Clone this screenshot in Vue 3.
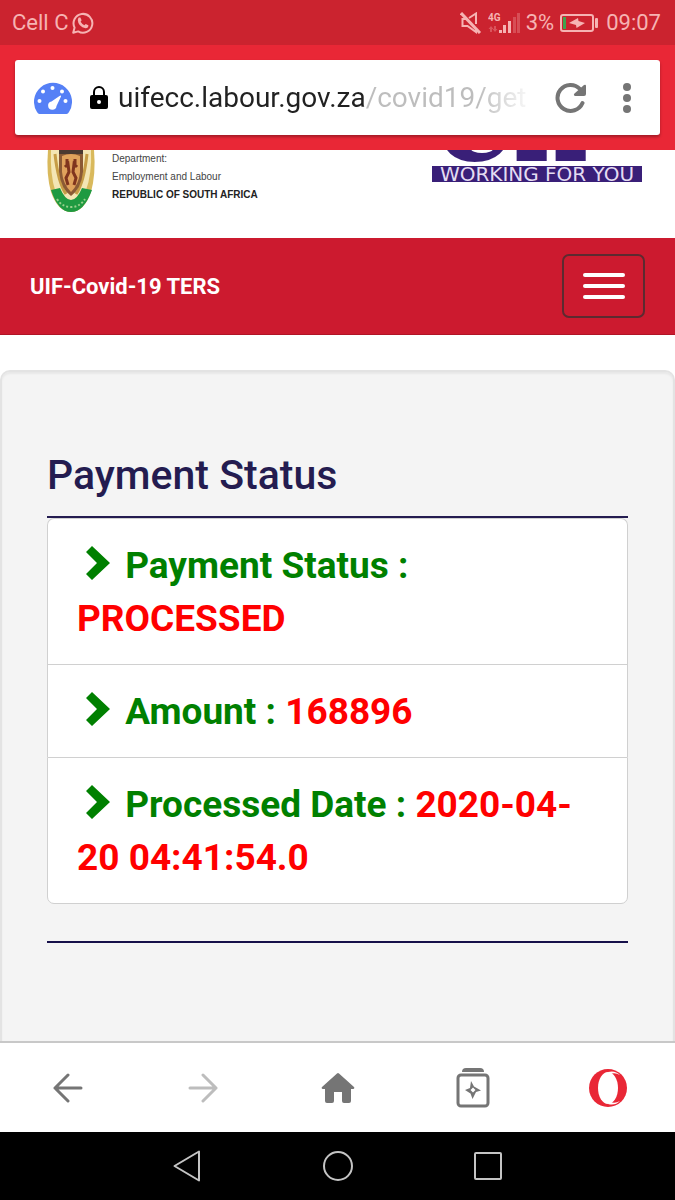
<script setup>
import { ref } from 'vue';

const url = ref('uifecc.labour.gov.za/covid19/get');

const items = ref([
    { label: 'Payment Status :', value: 'PROCESSED' },
    { label: 'Amount :', value: '168896' },
    { label: 'Processed Date :', value: '2020-04-20 04:41:54.0' },
]);
</script>

<template>
    <div class="phone">
        <div class="status-bar">
            <div class="carrier">
                <span>Cell C</span>
                <svg width="22" height="22" viewBox="0 0 22 22" fill="none" stroke="currentColor" stroke-width="2">
                    <path d="M1.2 20.8 L2.6 15.6 A9.4 9.4 0 1 1 6.2 19.4 Z" stroke-linejoin="round" />
                    <path d="M6.8 5.6 L8.4 5.4 L9.6 8.3 L8.6 9.8 Q10 12.2 12.4 13.2 L13.7 12 L16.4 13.3 Q16.5 16.2 13.6 16.2 Q6.2 14.6 5.8 8.2 Q5.8 6.6 6.8 5.6 Z" fill="currentColor" stroke="none" />
                </svg>
            </div>
            <div class="indicators">
                <svg width="22" height="22" viewBox="0 0 22 22" fill="none" stroke="currentColor" stroke-width="2">
                    <path d="M1 1 L20 21" stroke-width="3" />
                    <path d="M6 7 H2.5 V14 H7.5 L16 20 V16 M9 6 L16 1.5 V12" />
                </svg>
                <svg class="signal" width="34" height="22" viewBox="0 0 34 22" fill="currentColor">
                    <text x="0" y="9" font-size="10" font-weight="700">4G</text>
                    <path d="M3 14 L5.5 17 H4 V20 H2 V17 H0.5 Z M7 20 L4.5 17 H6 V14 H8 V17 H9.5 Z" opacity="0.35" />
                    <rect x="11" y="18" width="3" height="3" />
                    <rect x="15" y="13" width="3" height="8" />
                    <rect x="20" y="9" width="3" height="12" />
                    <rect x="25" y="5" width="3" height="16" opacity="0.3" />
                    <rect x="29" y="1" width="3" height="20" opacity="0.3" />
                </svg>
                <span>3%</span>
                <svg class="battery" width="38" height="18" viewBox="0 0 38 18" fill="none">
                    <rect x="1" y="1" width="32" height="16" rx="2" stroke="currentColor" stroke-width="2" />
                    <rect x="3" y="3" width="3" height="12" fill="#3fa34d" />
                    <path d="M9 9 L18 4 L18.5 7 L25 9 L16.5 14 L16 11 Z" fill="currentColor" />
                    <rect x="35" y="4" width="3" height="10" rx="1" fill="currentColor" />
                </svg>
                <span>09:07</span>
            </div>
        </div>

        <header class="address-area">
            <form class="address-bar" @submit.prevent>
                <svg width="38" height="32" viewBox="0 0 38 32">
                    <path d="M5.5 32 Q4 32 3 30 A19 19 0 1 1 35 30 Q34 32 32.5 32 Z" fill="#5580f6" />
                    <g fill="#fff">
                        <circle cx="5.5" cy="19" r="2" />
                        <circle cx="9" cy="9.5" r="2" />
                        <circle cx="18.5" cy="6" r="2" />
                        <circle cx="28" cy="9.5" r="2" />
                        <circle cx="31.5" cy="19" r="2" />
                        <path d="M27 14.5 L22.5 24 A4.2 4.2 0 1 1 17.5 19.5 L25.5 14 Q27.5 13 27 14.5 Z" />
                    </g>
                </svg>
                <svg width="18" height="24" viewBox="0 0 18 24">
                    <path d="M4 11 V6 A5 5 0 0 1 14 6 V11" fill="none" stroke="#000" stroke-width="2" />
                    <rect x="0" y="9" width="18" height="14" rx="2" fill="#000" />
                    <circle cx="9" cy="16" r="2" fill="#fff" />
                </svg>
                <input v-model="url" class="url" type="text" aria-label="Address" spellcheck="false">
                <button type="button" class="icon-button" aria-label="Reload">
                    <svg width="32" height="32" viewBox="0 0 32 32">
                        <path d="M27.5 21 A13 13 0 1 1 25 7" fill="none" stroke="#757575" stroke-width="4" stroke-linecap="round" />
                        <path d="M31 4 V12 Q31 14 29 14 H20 Q18 13 19.5 11.5 L29 3 Q31 2 31 4 Z" fill="#757575" />
                    </svg>
                </button>
                <button type="button" class="icon-button" aria-label="Menu">
                    <svg width="10" height="32" viewBox="0 0 10 32" fill="#757575">
                        <circle cx="5" cy="5" r="4" />
                        <circle cx="5" cy="16" r="4" />
                        <circle cx="5" cy="27" r="4" />
                    </svg>
                </button>
            </form>
        </header>

        <main class="page">
            <div class="logos">
                <div class="department">
                    <svg width="50" height="64" viewBox="0 0 50 64">
                        <path d="M2 0 H48 Q50 24 45 42 Q38 62 25 62 Q12 62 5 42 Q0 24 2 0 Z" fill="#d9b95c" />
                        <path d="M5 0 H45 Q46 24 40 40 Q34 54 25 56 Q15 54 9 40 Q4 24 5 0 Z" fill="#f4e6b4" />
                        <path d="M5 40 L14 38 Q19 50 25 50 Q31 50 36 38 L46 40 Q38 62 25 62 Q12 62 5 40 Z" fill="#1f9a41" />
                        <path d="M11 49 Q16 57 25 57 Q34 57 39 49" fill="none" stroke="#9bd08c" stroke-width="2" stroke-dasharray="2 2" />
                        <path d="M9 4 Q12 32 20 44 M41 4 Q38 32 30 44" fill="none" stroke="#c69c45" stroke-width="3" />
                        <path d="M13 3 H37 V22 Q35 39 25 46 Q15 39 13 22 Z" fill="#8b5a35" />
                        <path d="M16 6 Q25 2 34 6 V22 Q33 34 25 42 Q17 34 16 22 Z" fill="#e0a25c" />
                        <path d="M21 9 V14 M29 9 V14 M19 17 L22 14 L23 22 L20 28 L22 35 M31 17 L28 14 L27 22 L30 28 L28 35" fill="none" stroke="#80351e" stroke-width="3" />
                        <rect x="13" y="0" width="24" height="4" fill="#4b3a31" />
                    </svg>
                    <div class="department-text">
                        <span>Department:</span>
                        <span>Employment and Labour</span>
                        <strong>REPUBLIC OF SOUTH AFRICA</strong>
                    </div>
                </div>
                <div class="uif">
                    <svg width="210" height="12" viewBox="0 0 210 12">
                        <text class="uif-letters" x="13 88 127" y="2">UIF</text>
                        <ellipse cx="50" cy="-1" rx="11" ry="4" fill="#fff" />
                    </svg>
                    <span class="slogan">WORKING FOR YOU</span>
                </div>
            </div>

            <nav class="navbar">
                <a class="brand" href="#">UIF-Covid-19 TERS</a>
                <button type="button" class="toggler" aria-label="Toggle navigation">
                    <span></span>
                    <span></span>
                    <span></span>
                </button>
            </nav>

            <section class="well">
                <h1>Payment Status</h1>
                <ul class="list-group">
                    <li v-for="item in items" :key="item.label">
                        <svg class="chevron" width="24" height="34" viewBox="0 0 24 34">
                            <path d="M6 0 L24 17 L6 34 L0 28 L11 17 L0 6 Z" fill="#008000" />
                        </svg>
                        {{ item.label }} <span class="value">{{ item.value }}</span>
                    </li>
                </ul>
            </section>
        </main>

        <nav class="browser-nav">
            <button type="button" aria-label="Back">
                <svg width="30" height="30" viewBox="0 0 30 30" fill="none" stroke="#757575" stroke-width="3" stroke-linecap="round" stroke-linejoin="round">
                    <path d="M28 15 H2 M15 2 L2 15 L15 28" />
                </svg>
            </button>
            <button type="button" aria-label="Forward">
                <svg width="30" height="30" viewBox="0 0 30 30" fill="none" stroke="#bdbdbd" stroke-width="3" stroke-linecap="round" stroke-linejoin="round">
                    <path d="M2 15 H28 M15 2 L28 15 L15 28" />
                </svg>
            </button>
            <button type="button" aria-label="Home">
                <svg width="34" height="30" viewBox="0 0 34 30">
                    <path d="M16 0.5 Q17 -0.5 18 0.5 L33 14 Q34 16 32 16 H30 V28 Q30 30 28 30 H23 Q21 30 21 28 V19 H13 V28 Q13 30 11 30 H6 Q4 30 4 28 V16 H2 Q0 16 1 14 Z" fill="#757575" />
                </svg>
            </button>
            <button type="button" aria-label="Tabs">
                <svg width="34" height="40" viewBox="0 0 34 40" fill="#757575">
                    <path d="M6 4 Q6 0 10 0 H24 Q28 0 28 4 Z" />
                    <rect x="2" y="7" width="30" height="31" rx="3" fill="none" stroke="#757575" stroke-width="3" />
                    <path fill-rule="evenodd" d="M15 13 L18 18.5 L25 22.5 L20 24 L16.5 31 L14.5 25.5 L9 22 L14 20 Z M17 19.5 L14.5 22 L17 24.5 L19.5 22 Z" />
                </svg>
            </button>
            <button type="button" aria-label="Opera menu">
                <svg width="38" height="38" viewBox="0 0 38 38">
                    <circle cx="19" cy="19" r="19" fill="#e92736" />
                    <ellipse cx="19" cy="19" rx="10" ry="16" fill="#fff" />
                    <path d="M19 3 Q26 1 31 6 Q26 3 21 5 Z M19 35 Q26 37 31 32 Q26 35 21 33 Z" fill="#fff" />
                </svg>
            </button>
        </nav>

        <footer class="system-nav">
            <button type="button" aria-label="System back">
                <svg width="30" height="34" viewBox="0 0 30 34">
                    <path d="M26 2.5 V31.5 L1.5 17 Z" fill="none" stroke="#c4c4c4" stroke-width="2" stroke-linejoin="round" />
                </svg>
            </button>
            <button type="button" aria-label="System home">
                <svg width="32" height="34" viewBox="0 0 32 34">
                    <circle cx="16" cy="17" r="14" fill="none" stroke="#c4c4c4" stroke-width="2" />
                </svg>
            </button>
            <button type="button" aria-label="Recent apps">
                <svg width="30" height="34" viewBox="0 0 30 34">
                    <rect x="2" y="4" width="26" height="26" rx="1" fill="none" stroke="#c4c4c4" stroke-width="2" />
                </svg>
            </button>
        </footer>
    </div>
</template>

<style>
body {
    margin: 0;
}
</style>

<style scoped>
.phone {
    min-height: 100vh;
    display: flex;
    flex-direction: column;
    background: #fff;
    font-family: Roboto, "Liberation Sans", sans-serif;
}

.phone * {
    box-sizing: border-box;
}

svg {
    display: block;
    flex: none;
}

button {
    display: flex;
    align-items: center;
    justify-content: center;
    padding: 0;
    border: 0;
    background: none;
}

/* --- Status bar --- */
.status-bar {
    display: flex;
    align-items: center;
    justify-content: space-between;
    height: 45px;
    padding: 0 14px 0 12px;
    background: #cb232f;
    color: #f6b3b3;
    font-size: 22px;
}

.carrier,
.indicators {
    display: flex;
    align-items: center;
    gap: 4px;
}

.signal {
    margin-left: 2px;
}

.battery {
    margin: 0 4px 0 2px;
}

/* --- Address bar --- */
.address-area {
    padding: 15px;
    background: #e92736;
}

.address-bar {
    display: flex;
    align-items: center;
    height: 75px;
    padding: 0 28px 0 19px;
    gap: 18px;
    background: #fff;
    border-radius: 3px;
    box-shadow: 0 2px 3px rgba(0, 0, 0, 0.3);
}

.url {
    flex: 1;
    min-width: 0;
    margin-left: -8px;
    padding: 0;
    border: 0;
    outline: 0;
    font-family: inherit;
    font-size: 28px;
    line-height: 36px;
    color: transparent;
    background: linear-gradient(to right, #212121 247px, #bdbdbd 247px, #bdbdbd 360px, #fff 416px);
    background-clip: text;
    -webkit-background-clip: text;
}

.icon-button + .icon-button {
    margin-left: 17px;
}

/* --- Page --- */
.page {
    flex: 1;
    display: flex;
    flex-direction: column;
}

.logos {
    display: flex;
    justify-content: space-between;
    height: 88px;
    padding: 0 33px 0 46px;
}

.department {
    display: flex;
    gap: 16px;
}

.department-text {
    display: flex;
    flex-direction: column;
    font-family: "Liberation Sans", sans-serif;
    font-size: 10px;
    line-height: 18px;
    color: #444;
}

.department-text strong {
    color: #222;
}

.uif {
    display: flex;
    flex-direction: column;
    gap: 4px;
}

.uif-letters {
    font-family: "Liberation Sans", sans-serif;
    font-size: 84px;
    font-weight: 700;
    fill: #391f78;
    stroke: #391f78;
    stroke-width: 18px;
}

.slogan {
    background: #391f78;
    color: #e4dcf2;
    font-family: "DejaVu Sans", sans-serif;
    font-size: 20px;
    line-height: 16px;
    text-align: center;
}

.navbar {
    display: flex;
    align-items: center;
    justify-content: space-between;
    height: 97px;
    padding: 0 30px;
    background: #cc1a2f;
    border-bottom: 1px solid #b01426;
}

.brand {
    color: #fff;
    font-size: 22px;
    font-weight: 700;
    text-decoration: none;
}

.toggler {
    flex-direction: column;
    gap: 7px;
    width: 83px;
    height: 64px;
    border: 2px solid #5d2a30;
    border-radius: 7px;
}

.toggler span {
    width: 42px;
    height: 4px;
    border-radius: 2px;
    background: #fff;
}

.well {
    flex: 1;
    margin-top: 35px;
    padding: 76px 45px 0;
    background: #f4f4f4;
    border: 2px solid #e3e3e3;
    border-bottom: 0;
    border-radius: 10px 10px 0 0;
    box-shadow: inset 0 2px 2px rgba(0, 0, 0, 0.05);
}

h1 {
    margin: 0;
    padding-bottom: 14px;
    border-bottom: 2px solid #241c50;
    color: #241c50;
    font-size: 41px;
    font-weight: 500;
    line-height: 54px;
}

.list-group {
    margin: 0;
    padding: 0 0 37px;
    border-bottom: 2px solid #16104a;
    list-style: none;
    color: #008000;
    font-size: 37px;
    font-weight: 700;
    line-height: 53px;
}

.list-group li {
    padding: 20px 29px 19px;
    background: #fff;
    border: 1px solid #d0d0d0;
    border-bottom-width: 0;
}

.list-group li:first-child {
    border-radius: 7px 7px 0 0;
}

.list-group li:last-child {
    border-bottom-width: 1px;
    border-radius: 0 0 7px 7px;
}

.chevron {
    display: inline-block;
    margin: 0 6px 0 9px;
    vertical-align: -2px;
}

.value {
    color: #f00;
}

/* --- Browser and system navigation --- */
.browser-nav {
    display: grid;
    grid-template-columns: repeat(5, 1fr);
    height: 91px;
    border-top: 2px solid #c8c8c8;
    background: #fff;
}

.system-nav {
    display: flex;
    align-items: center;
    justify-content: center;
    gap: 119px;
    height: 68px;
    background: #000;
}
</style>
